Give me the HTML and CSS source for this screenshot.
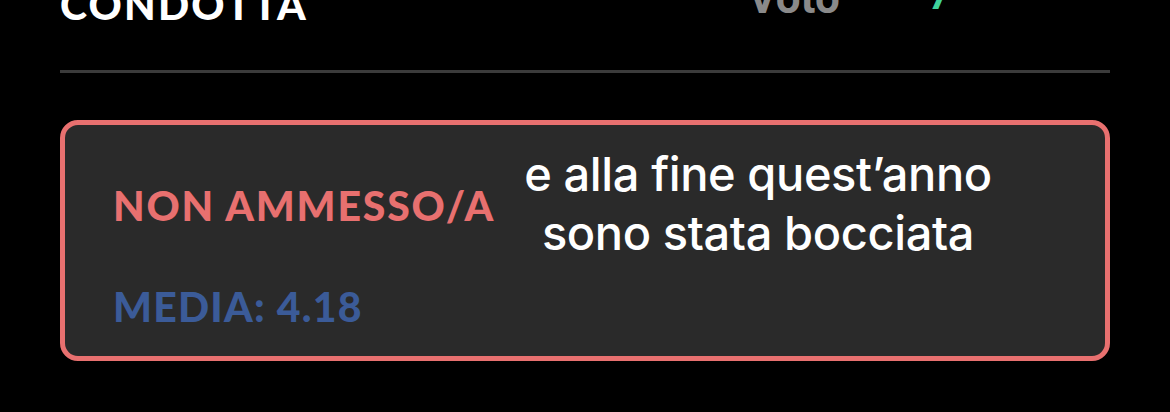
FILE: index.html
```html
<!DOCTYPE html>
<html lang="it">
<head>
    <meta charset="UTF-8">
    <meta name="viewport" content="width=device-width, initial-scale=1.0">
    <title>Pagella</title>
    <link rel="stylesheet" href="styles.css">
</head>
<body>
    <div class="page">
        <!-- ultima riga della pagella -->
        <div class="subject-row">
            <span class="subject">CONDOTTA</span>
            <span class="grade-label">Voto</span>
            <span class="grade">7</span>
        </div>
        <div class="divider"></div>

        <!-- esito finale -->
        <div class="result-card">
            <div class="result">NON AMMESSO/A</div>
            <div class="average">MEDIA: 4.18</div>
            <div class="caption">e alla fine quest’anno<br>sono stata bocciata</div>
        </div>
    </div>
</body>
</html>
```

FILE: styles.css
```css
/* Pagella, tema scuro */
body {
    margin: 0;
    padding: 0;
    background-color: #000;
    font-family: Roboto, "Liberation Sans", sans-serif;
    overflow: hidden;
}
.page {
    padding: 0 60px;
}
.subject-row {
    display: flex;
    align-items: flex-start;
    height: 44px;
    margin-top: -17px;
}
.subject {
    color: #fff;
    font-family: Lato, "Noto Sans", sans-serif;
    font-size: 41px;
    font-weight: 900;
    line-height: 44px;
    letter-spacing: 2.2px;
    width: 688px;
}
.grade-label {
    margin-top: -7px;
    color: #8a8a8a;
    font-size: 44px;
    font-weight: 700;
    line-height: 44px;
    width: 180px;
}
.grade {
    margin-top: -9px;
    color: #3fd29b;
    font-size: 40px;
    font-weight: 700;
    line-height: 44px;
}
.divider {
    height: 3px;
    background-color: #3b3b3b;
    margin-top: 43px;
}
.result-card {
    position: relative;
    margin-top: 47px;
    height: 231px;
    background-color: #2a2a2a;
    border: 5px solid #e8706f;
    border-radius: 18px;
    padding: 0 48px;
}
.result {
    margin-top: 57px;
    color: #e8706f;
    font-family: Lato, "Noto Sans", sans-serif;
    font-size: 41px;
    font-weight: 900;
    line-height: 48px;
    letter-spacing: 1.8px;
}
.average {
    margin-top: 53px;
    color: #3b5b98;
    font-family: Lato, "Noto Sans", sans-serif;
    font-size: 41px;
    font-weight: 900;
    line-height: 48px;
    letter-spacing: 1.2px;
}
/* testo sovrapposto al riquadro */
.caption {
    position: absolute;
    left: 443px;
    top: 19px;
    width: 500px;
    text-align: center;
    color: #fff;
    font-family: Inter, Roboto, sans-serif;
    font-size: 47px;
    font-weight: 500;
    line-height: 59px;
    letter-spacing: -0.4px;
}
```
